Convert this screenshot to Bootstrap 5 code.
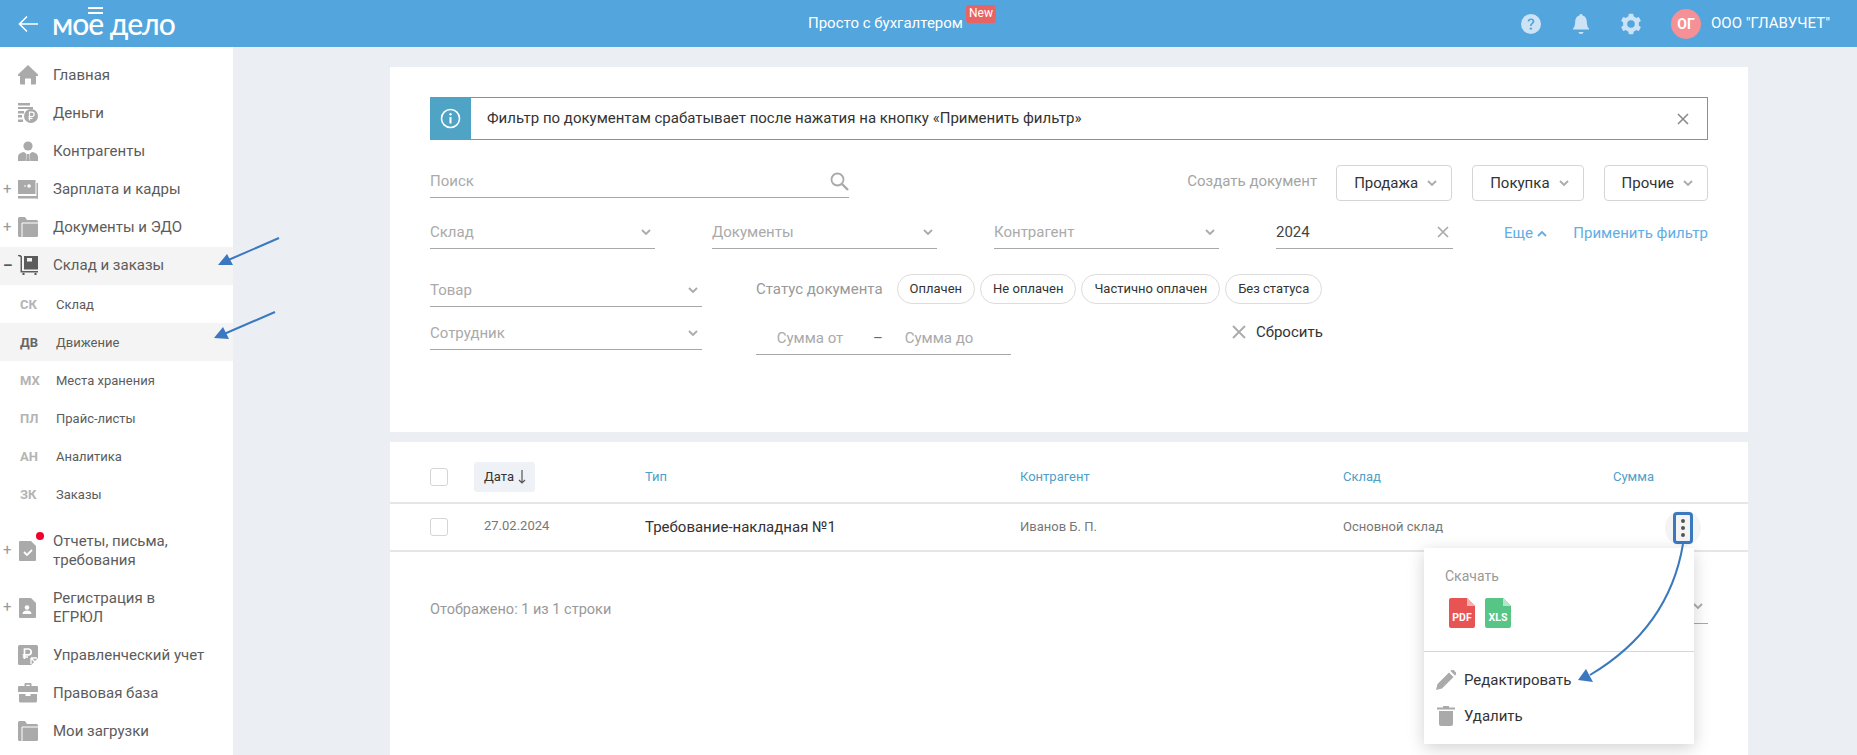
<!DOCTYPE html>
<html lang="ru">
<head>
<meta charset="utf-8">
<title>Движение</title>
<link href="https://cdn.jsdelivr.net/npm/bootstrap@5.3.0/dist/css/bootstrap.min.css" rel="stylesheet">
<style>
html,body{height:100%;}
body{font-family:Roboto,"Liberation Sans",sans-serif;background:#ebeef2;color:#333;overflow:hidden;width:1857px;height:755px;position:relative;}
.topbar{height:47px;background:#52a5dd;color:#fff;padding:0 0 0 18px;flex:none;position:relative;}
.logo-word{font-family:Lato,sans-serif;font-size:30px;font-weight:500;line-height:47px;margin-left:14px;letter-spacing:-1px;position:relative;white-space:nowrap;}
.logo-bars{position:absolute;left:36px;top:7px;width:15px;height:7px;border-top:2px solid #fff;border-bottom:2px solid #fff;}
.top-center{position:absolute;left:808px;top:0;height:47px;font-size:15px;line-height:47px;white-space:nowrap;}
.new-tag{position:absolute;left:158px;top:5px;height:18px;width:30px;background:#e86464;border-radius:3px;font-size:12px;line-height:17px;text-align:center;}
.top-right{margin-left:auto;padding-right:0;width:338px;}
.top-ico{width:24px;height:24px;margin-right:26px;}
.avatar{width:30px;height:30px;border-radius:50%;background:#f49096;font-size:14px;font-weight:700;line-height:30px;text-align:center;margin-left:2px;margin-right:10px;}
.org{font-size:15px;white-space:nowrap;}
.shell{height:708px;}
.sidenav{width:233px;flex:none;background:#fff;padding-top:10px;font-size:15px;color:#5c5c5c;}
.nav-row{height:38px;line-height:19px;}
.nav-row.lift{padding-bottom:2px;}
.nav-row.tall{height:57px;}
.nav-row.on{background:#f4f4f4;}
.sign{width:18px;text-align:left;padding-left:3px;color:#999;font-size:15px;flex:none;}
.sign-open{color:#555;font-weight:700;}
.nav-ico{width:20px;height:20px;margin-right:15px;flex:none;fill:#aaa;position:relative;}
.nav-ico.dk{fill:#5c5c5c;}
.sub-row{height:38px;padding:1px 0 0 20px;font-size:13px;}
.sub-row b{width:36px;flex:none;color:#b4b4b4;font-size:13px;font-weight:700;}
.sub-row.on{background:#f4f4f4;}
.sub-row.on b{color:#666;}
.gap-top{margin-top:9px;}
.red-dot{position:absolute;left:18px;top:-9px;width:8px;height:8px;border-radius:50%;background:#f0002a;}
.ico-wrap{position:relative;width:35px;flex:none;}
.workspace{flex:1;padding:20px 109px 0 157px;min-width:0;}
.sheet{background:#fff;}
.filters{height:365px;padding:30px 40px 0;}
.notice{height:43px;border:1px solid #4fa3c5;font-size:15px;color:#333;}
.notice-ico{width:41px;background:#4fa3c5;align-self:stretch;margin:-1px 0 -1px -1px;flex:none;}
.notice-x{margin-left:auto;margin-right:18px;}
.row-one{margin-top:25px;height:33px;}
.ufield{height:33px;border-bottom:1px solid #a8a8a8;font-size:15px;color:#aaa;flex:none;}
.w-search{width:419px;}
.w-sel{width:225px;margin-right:57px;}
.w-year{width:177px;color:#444;margin-right:51px;}
.w-prod{width:272px;}
.make-label{margin-left:auto;font-size:15px;color:#a5a5a5;margin-right:19px;}
.drop-btn{height:36px;border:1px solid #d5d5d5;border-radius:4px;background:#fff;font-size:15px;color:#333;padding:0 14px 0 17px;margin-left:20px;gap:9px;align-self:flex-start;}
.row-one .make-label + .drop-btn{margin-left:0;}
.row-two{margin-top:18px;height:33px;}
.blue-link{color:#61ade4;font-size:15px;white-space:nowrap;padding-top:2px;}
.row-lower{margin-top:25px;}
.left-col{width:272px;margin-right:54px;flex:none;}
.left-col .ufield+.ufield{margin-top:10px;}
.status-label{font-size:15px;color:#999;margin-right:14px;}
.chip-pill{height:30px;border:1px solid #dcdcdc;border-radius:15px;font-size:13px;color:#333;padding:0 12px;margin-right:5px;white-space:nowrap;}
.sum-row{margin-top:15px;}
.sum-wrap{width:255px;height:36px;border-bottom:1px solid #a8a8a8;font-size:15px;color:#aaa;padding-top:4px;flex:none;}
.sum-a{width:108px;text-align:center;}
.sum-d{width:20px;color:#666;text-align:center;margin-left:4px;}
.sum-b{width:92px;text-align:center;margin-left:5px;}
.reset{font-size:15px;color:#333;gap:10px;margin-top:-10px;margin-left:221px;}
.listing{margin-top:10px;height:313px;padding:0;}
.t-head{height:62px;border-bottom:2px solid #e6e6e6;font-size:13px;color:#4d9fc9;padding:10px 0 0 40px;}
.t-row{height:48px;border-bottom:2px solid #e6e6e6;padding-left:40px;font-size:13px;color:#777;}
.cbx{width:18px;height:18px;border:1px solid #d5d5d5;border-radius:3px;flex:none;margin-right:26px;background:#fff;}
.date-pill{width:61px;height:30px;background:#eef1f6;border-radius:3px;color:#333;padding-left:10px;margin-right:110px;flex:none;}
.date-cell{width:171px;padding-left:10px;margin-top:-3px;flex:none;}
.col-type{width:375px;flex:none;}
.col-org{width:323px;flex:none;}
.col-store{width:270px;flex:none;}
.doc-name{font-size:15px;color:#333;}
.dots-wrap{width:36px;height:36px;border-radius:50%;background:#f4f4f4;position:absolute;left:1275px;top:68px;}
.dots-btn{width:20px;height:32px;border:3px solid #3a78c0;border-radius:4px;gap:3px;}
.dots-btn i{width:4px;height:4px;background:#555;border-radius:50%;display:block;}
.list-foot{padding:47px 0 0 40px;font-size:14.5px;color:#999;position:relative;}
.pager-stub{position:absolute;left:1240px;top:38px;width:78px;height:34px;border-bottom:1px solid #a8a8a8;padding-right:5px;}
.popup{position:absolute;left:1424px;top:548px;width:270px;height:196px;background:#fff;box-shadow:0 4px 16px rgba(0,0,0,.18);z-index:5;font-size:15px;color:#333;}
.pop-title{padding:19px 0 0 21px;font-size:14px;color:#999;line-height:18px;}
.pop-files{padding:13px 0 0 25px;gap:10px;height:66px;}
.pop-line{border-top:1px solid #d5d5d5;margin-bottom:10px;}
.pop-item{height:36px;padding-left:12px;gap:8px;}
.trash{margin:0 1px;}
.marks{position:absolute;left:0;top:0;width:1857px;height:755px;z-index:9;pointer-events:none;}
</style>
</head>
<body>
<header class="topbar d-flex align-items-center">
  <svg width="20" height="18" viewBox="0 0 20 18" fill="none" stroke="#fff" stroke-width="1.6"><path d="M20 9H1.5M9 1.5 1.5 9 9 16.5"/></svg>
  <span class="logo-word">мое дело<span class="logo-bars"></span></span>
  <div class="top-center">Просто с бухгалтером<span class="new-tag">New</span></div>
  <div class="top-right d-flex align-items-center">
    <svg class="top-ico" viewBox="0 0 24 24"><circle cx="12" cy="12" r="10" fill="#cce3f6"/><path d="M8.6 9.6c0-2 1.5-3.2 3.4-3.2 2 0 3.4 1.2 3.4 2.9 0 2.5-2.6 2.3-2.6 4.6h-1.8c0-3 2.5-3 2.5-4.5 0-.7-.6-1.3-1.5-1.3s-1.6.6-1.6 1.5z" fill="#52a5dd"/><circle cx="11.9" cy="16.6" r="1.2" fill="#52a5dd"/></svg>
    <svg class="top-ico" viewBox="0 0 24 24" fill="#cce3f6"><path d="M12 2c1 0 1.6.7 1.6 1.6 2.8.7 4.2 3 4.2 6 0 4 .9 5.600 2.200 7v1H4v-1c1.300-1.400 2.200-3 2.200-7 0-3 1.400-5.300 4.200-6C10.400 2.700 11 2 12 2z"/><path d="M9.500 20h5c0 1-1.100 2-2.500 2s-2.500-1-2.500-2z"/></svg>
    <svg class="top-ico" viewBox="0 0 24 24"><g fill="#cce3f6"><circle cx="12" cy="12" r="8"/><g><rect x="9.500" y="1.800" width="5" height="5" rx="1"/><rect x="9.500" y="17.200" width="5" height="5" rx="1"/></g><g transform="rotate(60 12 12)"><rect x="9.500" y="1.800" width="5" height="5" rx="1"/><rect x="9.500" y="17.200" width="5" height="5" rx="1"/></g><g transform="rotate(120 12 12)"><rect x="9.500" y="1.800" width="5" height="5" rx="1"/><rect x="9.500" y="17.200" width="5" height="5" rx="1"/></g></g><circle cx="12" cy="12" r="3.800" fill="#52a5dd"/></svg>
    <span class="avatar">ОГ</span>
    <span class="org">ООО "ГЛАВУЧЕТ"</span>
  </div>
</header>
<div class="shell d-flex">
  <nav class="sidenav">
    <div class="nav-row lift d-flex align-items-center"><span class="sign"></span><svg class="nav-ico" viewBox="0 0 20 20"><path d="M10 0 20 9.500V11h-2v7.500a1 1 0 0 1-1 1h-4v-6H7v6H3a1 1 0 0 1-1-1V11H0V9.500z"/></svg>Главная</div>
    <div class="nav-row lift d-flex align-items-center"><span class="sign"></span><svg class="nav-ico" viewBox="0 0 20 20"><path d="M0 0h12v2.500H0zM0 4h15v2H0zM0 8h6v2.500H0zM0 12h4v2.500H0zM0 16.500h5V19H0z"/><circle cx="13" cy="13" r="7"/><path d="M11.500 17.500V9.200h2.500a2 2 0 0 1 0 4.300h-3.500M10.500 15.300h4" stroke="#fff" stroke-width="1.200" fill="none"/></svg>Деньги</div>
    <div class="nav-row lift d-flex align-items-center"><span class="sign"></span><svg class="nav-ico" viewBox="0 0 20 20"><circle cx="10" cy="5" r="4.600"/><path d="M0 20v-4c0-3 3-4.500 6-5l2.500 2-.8 7zM20 20v-4c0-3-3-4.500-6-5l-2.500 2 .8 7zM9 13h2l1 7H8z"/></svg>Контрагенты</div>
    <div class="nav-row lift d-flex align-items-center"><span class="sign">+</span><svg class="nav-ico" viewBox="0 0 20 20"><path d="M0 1h17.500v14H0z"/><rect x="18.500" y="4" width="1.500" height="15.500"/><rect x="0" y="17" width="20" height="2.500"/><circle cx="11" cy="7" r="1.800" fill="#fff"/><path d="M6 7h2" stroke="#fff"/></svg>Зарплата и кадры</div>
    <div class="nav-row lift d-flex align-items-center"><span class="sign">+</span><svg class="nav-ico" viewBox="0 0 20 20"><path d="M1.500 0H7l2 3h9.500A1.500 1.500 0 0 1 20 4.500v14a1.500 1.500 0 0 1-1.500 1.500h-17A1.500 1.500 0 0 1 0 18.500v-17A1.500 1.500 0 0 1 1.500 0z"/><path d="M4 20V6h16" stroke="#fff" fill="none"/></svg>Документы и ЭДО</div>
    <div class="nav-row lift on d-flex align-items-center"><span class="sign sign-open">–</span><svg class="nav-ico dk" viewBox="0 0 20 20"><path d="M0 0h2.500L4 1.500V16h16v1.500H2.500V2L0 1z"/><path d="M6 1h14v13.500H6z"/><rect x="9" y="3" width="5" height="3.500" fill="#f4f4f4"/><circle cx="5.500" cy="19" r="1.200"/><circle cx="17.500" cy="19" r="1.200"/></svg>Склад и заказы</div>
    <div class="sub-row d-flex align-items-center"><b>СК</b>Склад</div>
    <div class="sub-row on d-flex align-items-center"><b>ДВ</b>Движение</div>
    <div class="sub-row d-flex align-items-center"><b>МХ</b>Места хранения</div>
    <div class="sub-row d-flex align-items-center"><b>ПЛ</b>Прайс-листы</div>
    <div class="sub-row d-flex align-items-center"><b>АН</b>Аналитика</div>
    <div class="sub-row d-flex align-items-center"><b>ЗК</b>Заказы</div>
    <div class="nav-row tall gap-top d-flex align-items-center"><span class="sign">+</span><span class="ico-wrap d-flex"><svg class="nav-ico" viewBox="0 0 20 20"><path d="M2 0h11l5 5v14a1 1 0 0 1-1 1H2a1 1 0 0 1-1-1V1a1 1 0 0 1 1-1z"/><path d="m6 11 3 3 5-5" stroke="#fff" stroke-width="1.800" fill="none"/></svg><span class="red-dot"></span></span><span>Отчеты, письма,<br>требования</span></div>
    <div class="nav-row tall d-flex align-items-center"><span class="sign">+</span><svg class="nav-ico" viewBox="0 0 20 20"><path d="M2 0h11l5 5v14a1 1 0 0 1-1 1H2a1 1 0 0 1-1-1V1a1 1 0 0 1 1-1z"/><circle cx="9" cy="9.500" r="2.300" fill="#fff"/><path d="M4.500 16c0-2.500 2-3.500 4.500-3.500s4.500 1 4.500 3.500z" fill="#fff"/></svg><span>Регистрация в<br>ЕГРЮЛ</span></div>
    <div class="nav-row d-flex align-items-center"><span class="sign"></span><svg class="nav-ico" viewBox="0 0 20 20"><path d="M1.500 0h17A1.500 1.500 0 0 1 20 1.500V13l-7 7H1.500A1.500 1.500 0 0 1 0 18.500v-17A1.500 1.500 0 0 1 1.500 0z"/><path d="M6.500 14V4h3.800a2.700 2.700 0 0 1 0 5.800H4.800M4.800 12H10" stroke="#fff" stroke-width="1.700" fill="none"/><path d="M13 13h6M13 13v6M13 13l6 6" stroke="#fff" stroke-width="1.300" fill="none"/></svg>Управленческий учет</div>
    <div class="nav-row d-flex align-items-center"><span class="sign"></span><svg class="nav-ico" viewBox="0 0 20 20"><path d="M6.500 3V1a1 1 0 0 1 1-1h5a1 1 0 0 1 1 1v2h-1.800V1.800H8.300V3z"/><path d="M1 3h18a1 1 0 0 1 1 1v5H0V4a1 1 0 0 1 1-1zM1 11h6.500v2h5v-2H19v7a1.500 1.500 0 0 1-1.500 1.500h-15A1.500 1.500 0 0 1 1 18z"/></svg>Правовая база</div>
    <div class="nav-row d-flex align-items-center"><span class="sign"></span><svg class="nav-ico" viewBox="0 0 20 20"><path d="M1.500 0H7l2 3h9.500A1.500 1.500 0 0 1 20 4.500v14a1.500 1.500 0 0 1-1.500 1.500h-17A1.500 1.500 0 0 1 0 18.500v-17A1.500 1.500 0 0 1 1.500 0z"/><path d="M4 20V6h16" stroke="#fff" fill="none"/></svg>Мои загрузки</div>
  </nav>
  <main class="workspace">
    <section class="sheet filters">
      <div class="notice d-flex align-items-center">
        <span class="notice-ico d-flex align-items-center justify-content-center"><svg width="21" height="21" viewBox="0 0 21 21" fill="none" stroke="#fff"><circle cx="10.500" cy="10.500" r="9" stroke-width="1.600"/><path d="M10.500 9v6.500" stroke-width="2"/><circle cx="10.500" cy="6.200" r="1.200" fill="#fff" stroke="none"/></svg></span>
        <span class="ms-3">Фильтр по документам срабатывает после нажатия на кнопку «Применить фильтр»</span>
        <svg class="notice-x" width="12" height="12" viewBox="0 0 12 12" stroke="#888" stroke-width="1.500"><path d="m1 1 10 10M11 1 1 11"/></svg>
      </div>
      <div class="row-one d-flex align-items-center">
        <div class="ufield w-search d-flex align-items-center justify-content-between">Поиск<svg width="19" height="19" viewBox="0 0 19 19" fill="none" stroke="#aaa" stroke-width="1.800"><circle cx="7.500" cy="7.500" r="6"/><path d="m12 12 6 6" stroke-width="2.400"/></svg></div>
        <span class="make-label">Создать документ</span>
        <span class="drop-btn d-inline-flex align-items-center">Продажа<svg width="10" height="7" viewBox="0 0 10 7" fill="none" stroke="#aaa" stroke-width="1.800"><path d="m1 1 4 4 4-4"/></svg></span>
        <span class="drop-btn d-inline-flex align-items-center">Покупка<svg width="10" height="7" viewBox="0 0 10 7" fill="none" stroke="#aaa" stroke-width="1.800"><path d="m1 1 4 4 4-4"/></svg></span>
        <span class="drop-btn d-inline-flex align-items-center">Прочие<svg width="10" height="7" viewBox="0 0 10 7" fill="none" stroke="#aaa" stroke-width="1.800"><path d="m1 1 4 4 4-4"/></svg></span>
      </div>
      <div class="row-two d-flex align-items-center">
        <div class="ufield w-sel d-flex align-items-center justify-content-between">Склад<svg class="me-1" width="10" height="7" viewBox="0 0 10 7" fill="none" stroke="#aaa" stroke-width="1.800"><path d="m1 1 4 4 4-4"/></svg></div>
        <div class="ufield w-sel d-flex align-items-center justify-content-between">Документы<svg class="me-1" width="10" height="7" viewBox="0 0 10 7" fill="none" stroke="#aaa" stroke-width="1.800"><path d="m1 1 4 4 4-4"/></svg></div>
        <div class="ufield w-sel d-flex align-items-center justify-content-between">Контрагент<svg class="me-1" width="10" height="7" viewBox="0 0 10 7" fill="none" stroke="#aaa" stroke-width="1.800"><path d="m1 1 4 4 4-4"/></svg></div>
        <div class="ufield w-year d-flex align-items-center justify-content-between">2024<svg class="me-1" width="12" height="12" viewBox="0 0 12 12" stroke="#aaa" stroke-width="1.700"><path d="m1 1 10 10M11 1 1 11"/></svg></div>
        <span class="blue-link d-inline-flex align-items-center gap-1">Еще<svg width="10" height="7" viewBox="0 0 10 7" fill="none" stroke="#61ade4" stroke-width="1.800"><path d="m1 6 4-4 4 4"/></svg></span>
        <span class="blue-link ms-auto">Применить фильтр</span>
      </div>
      <div class="row-lower d-flex">
        <div class="left-col">
          <div class="ufield w-prod d-flex align-items-center justify-content-between">Товар<svg class="me-1" width="10" height="7" viewBox="0 0 10 7" fill="none" stroke="#aaa" stroke-width="1.800"><path d="m1 1 4 4 4-4"/></svg></div>
          <div class="ufield w-prod d-flex align-items-center justify-content-between">Сотрудник<svg class="me-1" width="10" height="7" viewBox="0 0 10 7" fill="none" stroke="#aaa" stroke-width="1.800"><path d="m1 1 4 4 4-4"/></svg></div>
        </div>
        <div>
          <div class="d-flex align-items-center">
            <span class="status-label">Статус документа</span>
            <span class="chip-pill d-inline-flex align-items-center">Оплачен</span>
            <span class="chip-pill d-inline-flex align-items-center">Не оплачен</span>
            <span class="chip-pill d-inline-flex align-items-center">Частично оплачен</span>
            <span class="chip-pill d-inline-flex align-items-center">Без статуса</span>
          </div>
          <div class="sum-row d-flex align-items-center">
            <div class="sum-wrap d-flex align-items-center"><span class="sum-a">Сумма от</span><span class="sum-d">–</span><span class="sum-b">Сумма до</span></div>
            <span class="reset d-inline-flex align-items-center"><svg width="14" height="14" viewBox="0 0 14 14" stroke="#aaa" stroke-width="1.800"><path d="m1 1 12 12M13 1 1 13"/></svg>Сбросить</span>
          </div>
        </div>
      </div>
    </section>
    <section class="sheet listing position-relative">
      <div class="t-head d-flex align-items-center">
        <span class="cbx"></span>
        <span class="date-pill d-flex align-items-center gap-1">Дата<svg width="8" height="14" viewBox="0 0 8 14" fill="none" stroke="#555" stroke-width="1.200"><path d="M4 0v13M1 10l3 3 3-3"/></svg></span>
        <span class="col-type">Тип</span><span class="col-org">Контрагент</span><span class="col-store">Склад</span><span>Сумма</span>
      </div>
      <div class="t-row d-flex align-items-center">
        <span class="cbx"></span>
        <span class="date-cell">27.02.2024</span>
        <span class="col-type doc-name">Требование-накладная №1</span><span class="col-org">Иванов Б. П.</span><span class="col-store">Основной склад</span>
      </div>
      <div class="dots-wrap d-flex align-items-center justify-content-center"><span class="dots-btn d-flex flex-column align-items-center justify-content-center"><i></i><i></i><i></i></span></div>
      <div class="list-foot">Отображено: 1 из 1 строки<span class="pager-stub d-flex align-items-center justify-content-end"><svg width="10" height="7" viewBox="0 0 10 7" fill="none" stroke="#aaa" stroke-width="1.800"><path d="m1 1 4 4 4-4"/></svg></span></div>
    </section>
  </main>
</div>
<aside class="popup">
  <div class="pop-title">Скачать</div>
  <div class="pop-files d-flex">
    <svg width="26" height="30" viewBox="0 0 26 30"><path d="M2 0h16l8 8v20a2 2 0 0 1-2 2H2a2 2 0 0 1-2-2V2a2 2 0 0 1 2-2z" fill="#e85454"/><path d="M18 0l8 8h-8z" fill="#f6b0b0"/><text x="13" y="22.500" text-anchor="middle" font-family="Roboto,sans-serif" font-size="10.500" font-weight="700" fill="#fff">PDF</text></svg>
    <svg width="26" height="30" viewBox="0 0 26 30"><path d="M2 0h16l8 8v20a2 2 0 0 1-2 2H2a2 2 0 0 1-2-2V2a2 2 0 0 1 2-2z" fill="#56c586"/><path d="M18 0l8 8h-8z" fill="#b5e6c9"/><text x="13" y="22.500" text-anchor="middle" font-family="Roboto,sans-serif" font-size="10.500" font-weight="700" fill="#fff">XLS</text></svg>
  </div>
  <div class="pop-line"></div>
  <div class="pop-item d-flex align-items-center"><svg width="20" height="20" viewBox="0 0 20 20" fill="#aaa"><path d="M0 20l1.500-6L13 2.500l4.500 4.500L6 18.500zM14.500 1l1-1a1.500 1.500 0 0 1 2 0L20 2.500a1.500 1.500 0 0 1 0 2l-1 1z"/></svg>Редактировать</div>
  <div class="pop-item d-flex align-items-center"><svg class="trash" width="18" height="20" viewBox="0 0 18 20" fill="#aaa"><path d="M6 0h6v1.500h6V3.500H0V1.500h6zM2 5h14v13a2 2 0 0 1-2 2H4a2 2 0 0 1-2-2z"/></svg>Удалить</div>
</aside>
<svg class="marks" viewBox="0 0 1857 755">
  <g fill="none" stroke="#3a78c0" stroke-width="2">
    <path d="M279 238 226 261"/>
    <path d="M275 312 224 334"/>
    <path d="M1683 544C1672 610 1632 650 1590 675"/>
  </g>
  <g fill="#3a78c0">
    <path d="M218 265 227 254 233 265z"/>
    <path d="M214 338 223 327 229 339z"/>
    <path d="M1578 680 1586 669 1593 682z"/>
  </g>
</svg>
<script src="https://cdn.jsdelivr.net/npm/bootstrap@5.3.0/dist/js/bootstrap.bundle.min.js"></script>
</body>
</html>
